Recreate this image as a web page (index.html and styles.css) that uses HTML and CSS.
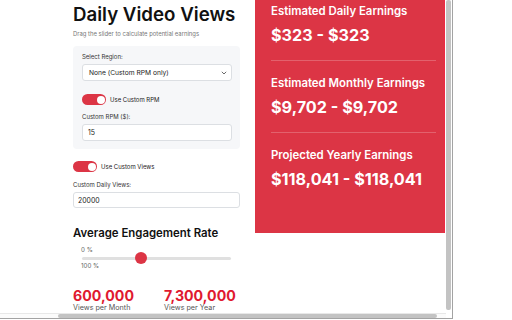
FILE: index.html
```html
<!DOCTYPE html>
<html>
<head>
<meta charset="utf-8">
<link rel="stylesheet" href="styles.css">
</head>
<body>
<div class="frame">
  <div class="viewport">
    <div class="page">
      <div class="left">
        <h1 class="title">Daily Video Views</h1>
        <p class="subtitle">Drag the slider to calculate potential earnings</p>
        <div class="card">
          <div class="label">Select Region:</div>
          <div class="select">
            <span>None (Custom RPM only)</span>
            <svg class="chev" width="6" height="4" viewBox="0 0 6 4"><path d="M0.8 0.8 L3 3 L5.2 0.8" fill="none" stroke="#444" stroke-width="0.8"/></svg>
          </div>
          <div class="toggle-row row-rpm">
            <span class="toggle"><span class="knob"></span></span>
            <span class="toggle-text">Use Custom RPM</span>
          </div>
          <div class="label label-gap">Custom RPM ($):</div>
          <div class="input">15</div>
        </div>
        <div class="toggle-row row-views">
          <span class="toggle"><span class="knob"></span></span>
          <span class="toggle-text">Use Custom Views</span>
        </div>
        <div class="label label-gap2">Custom Daily Views:</div>
        <div class="input input-wide">20000</div>
        <h2 class="section-title">Average Engagement Rate</h2>
        <div class="range">
          <div class="range-label">0 %</div>
          <div class="slider"><div class="track"></div><div class="thumb"></div></div>
          <div class="range-label">100 %</div>
        </div>
        <div class="stats">
          <div class="stat stat-month">
            <div class="stat-num">600,000</div>
            <div class="stat-label">Views per Month</div>
          </div>
          <div class="stat">
            <div class="stat-num">7,300,000</div>
            <div class="stat-label">Views per Year</div>
          </div>
        </div>
      </div>
      <div class="panel">
        <div class="earn earn-first">
          <div class="earn-label">Estimated Daily Earnings</div>
          <div class="earn-value">$323 - $323</div>
        </div>
        <div class="earn">
          <div class="earn-label">Estimated Monthly Earnings</div>
          <div class="earn-value">$9,702 - $9,702</div>
        </div>
        <div class="earn earn-last">
          <div class="earn-label">Projected Yearly Earnings</div>
          <div class="earn-value">$118,041 - $118,041</div>
        </div>
      </div>
    </div>
  </div>
  <div class="vscroll"></div>
  <div class="htrack"></div>
  <div class="hscroll"></div>
</div>
</body>
</html>
```
FILE: styles.css
```css
* { box-sizing: border-box; }
html, body { margin: 0; padding: 0; background: #fff; }
body { font-family: Inter, "Liberation Sans", sans-serif; color: #212529; }

.frame {
  position: relative;
  width: 453px;
  height: 319px;
  border-right: 1px solid #a3a3a3;
  border-bottom: 1px solid #a3a3a3;
  overflow: hidden;
}
.viewport {
  width: 446px;
  height: 313px;
  overflow: hidden;
}
.page {
  display: flex;
  align-items: flex-start;
  padding-left: 73px;
  gap: 15px;
}
.left {
  width: 167px;
  flex: none;
  padding-top: 3px;
}
.title {
  margin: 0;
  font-size: 18.7px;
  line-height: 24px;
  font-weight: 600;
  color: #111;
  white-space: nowrap;
}
.subtitle {
  margin: 3px 0 0;
  font-size: 5.9px;
  line-height: 8px;
  color: #777;
  white-space: nowrap;
}
.card {
  margin-top: 8px;
  background: #f6f7f9;
  border-radius: 4px;
  padding: 7px 8px 8px 9px;
}
.label {
  font-size: 6px;
  line-height: 8px;
  color: #333;
  white-space: nowrap;
}
.label-gap { margin-top: 8px; }
.label-gap2 { margin-top: 9px; }
.select {
  margin-top: 3px;
  height: 17px;
  background: #fff;
  border: 1px solid #dcdfe3;
  border-radius: 3px;
  display: flex;
  align-items: center;
  justify-content: space-between;
  padding: 0 4px 0 6px;
  font-size: 6.7px;
  color: #222;
}
.chev { display: block; }
.toggle-row {
  display: flex;
  align-items: center;
  height: 11px;
}
.row-rpm { margin-top: 13px; }
.row-views { margin-top: 12px; }
.toggle {
  position: relative;
  width: 24px;
  height: 11px;
  border-radius: 6px;
  background: #dc3545;
  flex: none;
}
.knob {
  position: absolute;
  right: 1.5px;
  top: 1.5px;
  width: 8px;
  height: 8px;
  border-radius: 50%;
  background: #fff;
}
.toggle-text {
  margin-left: 4px;
  font-size: 6px;
  color: #222;
  white-space: nowrap;
}
.input {
  margin-top: 3px;
  height: 17px;
  background: #fff;
  border: 1px solid #dcdfe3;
  border-radius: 3px;
  padding-left: 5px;
  display: flex;
  align-items: center;
  font-size: 6.9px;
  color: #222;
}
.input-wide { height: 16px; padding-left: 4px; }
.section-title {
  margin: 18px 0 0;
  font-size: 11.4px;
  line-height: 14px;
  font-weight: 600;
  color: #111;
  white-space: nowrap;
}
.range {
  margin-top: 6px;
  padding: 0 8px 0 8px;
}
.range-label {
  font-size: 6.2px;
  line-height: 8px;
  color: #666;
}
.slider {
  position: relative;
  height: 8px;
  margin-left: 1px;
}
.track {
  position: absolute;
  left: 0;
  right: 1px;
  top: 3px;
  height: 3px;
  border-radius: 2px;
  background: #e0e0e0;
}
.thumb {
  position: absolute;
  left: 53px;
  top: -2px;
  width: 12px;
  height: 12px;
  border-radius: 50%;
  background: #dc3545;
}
.stats {
  display: flex;
  margin-top: 19px;
}
.stat-month { width: 91px; }
.stat-num {
  font-size: 14.2px;
  line-height: 14px;
  font-weight: 700;
  color: #e0192f;
  white-space: nowrap;
}
.stat-label {
  font-size: 7.2px;
  line-height: 9px;
  color: #555;
  white-space: nowrap;
}
.panel {
  width: 190px;
  flex: none;
  background: #dc3545;
  border-right: 1px solid #ee2944;
  padding: 4px 8px 43px 16px;
  color: #fff;
}
.earn {
  border-bottom: 1px solid rgba(255,255,255,0.22);
  padding: 15px 0 14px;
}
.earn-first { padding-top: 0; }
.earn-last { border-bottom: none; padding-bottom: 0; }
.earn-label {
  font-size: 11.4px;
  line-height: 14px;
  font-weight: 600;
  white-space: nowrap;
}
.earn-value {
  margin-top: 6px;
  font-size: 16.2px;
  line-height: 22px;
  font-weight: 700;
  white-space: nowrap;
}
.vscroll {
  position: absolute;
  left: 446px;
  top: 0;
  width: 5px;
  height: 310px;
  border-radius: 2px;
  background: #c3c3c3;
}
.htrack {
  position: absolute;
  left: 0;
  top: 313px;
  width: 446px;
  height: 5px;
  border-top: 1px solid #e8e8e8;
  background: #fbfbfb;
}
.hscroll {
  position: absolute;
  left: 58px;
  top: 314px;
  width: 379px;
  height: 3.5px;
  border-radius: 2px;
  background: #c3c3c3;
}
```
